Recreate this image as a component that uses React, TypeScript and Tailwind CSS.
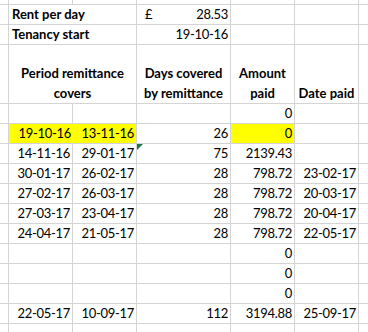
import type { ReactNode } from 'react';

type Align = 'l' | 'r' | 'c' | 'split';

function Cell({
  children,
  align = 'r',
  bold = false,
  yellow = false,
  span2 = false,
  className = '',
}: {
  children?: ReactNode;
  align?: Align;
  bold?: boolean;
  yellow?: boolean;
  span2?: boolean;
  className?: string;
}) {
  const alignClass =
    align === 'l'
      ? 'justify-start pl-[3px]'
      : align === 'c'
        ? 'justify-center'
        : align === 'split'
          ? 'justify-between pl-[8px] pr-[2px]'
          : 'justify-end pr-[2px]';
  return (
    <div
      className={`relative flex items-start whitespace-nowrap leading-[19px] ${alignClass} ${
        yellow ? 'bg-[#ffff00]' : 'bg-white'
      } ${bold ? 'font-bold' : ''} ${span2 ? 'col-span-2' : ''} ${className}`}
    >
      {children}
    </div>
  );
}

// Period from, period to, days, amount, date paid
const ROWS: string[][] = [
  ['', '', '', '0', ''],
  ['19-10-16', '13-11-16', '26', '0', ''],
  ['14-11-16', '29-01-17', '75', '2139.43', ''],
  ['30-01-17', '26-02-17', '28', '798.72', '23-02-17'],
  ['27-02-17', '26-03-17', '28', '798.72', '20-03-17'],
  ['27-03-17', '23-04-17', '28', '798.72', '20-04-17'],
  ['24-04-17', '21-05-17', '28', '798.72', '22-05-17'],
  ['', '', '', '0', ''],
  ['', '', '', '0', ''],
  ['', '', '', '0', ''],
  ['22-05-17', '10-09-17', '112', '3194.88', '25-09-17'],
];

export default function App() {
  return (
    <div
      className="grid h-[332px] w-[368px] grid-cols-[8px_63px_63px_93px_63px_63px_1fr] grid-rows-[4px_19px_19px_58px_repeat(11,19px)_1fr] gap-px overflow-hidden bg-[#d4d4d4] text-[13px] text-black"
      style={{ fontFamily: 'Lato, "Open Sans", sans-serif' }}
    >
      {/* top partial row */}
      {Array.from({ length: 7 }).map((_, i) => (
        <Cell key={`top-${i}`} />
      ))}

      {/* Rent per day */}
      <Cell />
      <Cell span2 align="l" bold>
        Rent per day
      </Cell>
      <Cell align="split" className="tracking-[-0.3px]">
        <span>£</span>
        <span>28.53</span>
      </Cell>
      <Cell />
      <Cell />
      <Cell />

      {/* Tenancy start */}
      <Cell />
      <Cell span2 align="l" bold>
        Tenancy start
      </Cell>
      <Cell className="tracking-[-0.3px]">19-10-16</Cell>
      <Cell />
      <Cell />
      <Cell />

      {/* Headers */}
      <Cell />
      <div className="col-span-2 flex flex-col items-center justify-end bg-white font-bold leading-[20px]">
        <span>Period remittance</span>
        <span>covers</span>
      </div>
      <div className="flex flex-col items-center justify-end bg-white font-bold leading-[20px]">
        <span>Days covered</span>
        <span>by remittance</span>
      </div>
      <div className="flex flex-col items-center justify-end bg-white font-bold leading-[20px]">
        <span>Amount</span>
        <span>paid</span>
      </div>
      <div className="flex flex-col items-center justify-end bg-white font-bold leading-[20px]">
        <span>Date paid</span>
      </div>
      <Cell />

      {/* Data rows */}
      {ROWS.map((row, i) => {
        const highlight = i === 1;
        return [
          <Cell key={`${i}-pad`} />,
          highlight ? (
            <div
              key={`${i}-ab`}
              className="col-span-2 grid grid-cols-[64px_63px] bg-[#ffff00] leading-[19px] tracking-[-0.3px]"
            >
              <span className="pr-[2px] text-right">{row[0]}</span>
              <span className="pr-[2px] text-right">{row[1]}</span>
            </div>
          ) : (
            [
              <Cell key={`${i}-a`} className="tracking-[-0.3px]">
                {row[0]}
              </Cell>,
              <Cell key={`${i}-b`} className="tracking-[-0.3px]">
                {row[1]}
              </Cell>,
            ]
          ),
          <Cell key={`${i}-c`} className="tracking-[-0.3px]">
            {i === 2 && (
              <svg className="absolute left-0 top-0" width="6" height="6" viewBox="0 0 6 6">
                <polygon points="0,0 6,0 0,6" fill="#217346" />
              </svg>
            )}
            {row[2]}
          </Cell>,
          <Cell key={`${i}-d`} yellow={highlight} className="tracking-[-0.3px]">
            {row[3]}
          </Cell>,
          <Cell key={`${i}-e`} className="tracking-[-0.3px]">
            {row[4]}
          </Cell>,
          <Cell key={`${i}-f`} />,
        ];
      })}

      {/* bottom partial row */}
      {Array.from({ length: 7 }).map((_, i) => (
        <Cell key={`bot-${i}`} />
      ))}
    </div>
  );
}
